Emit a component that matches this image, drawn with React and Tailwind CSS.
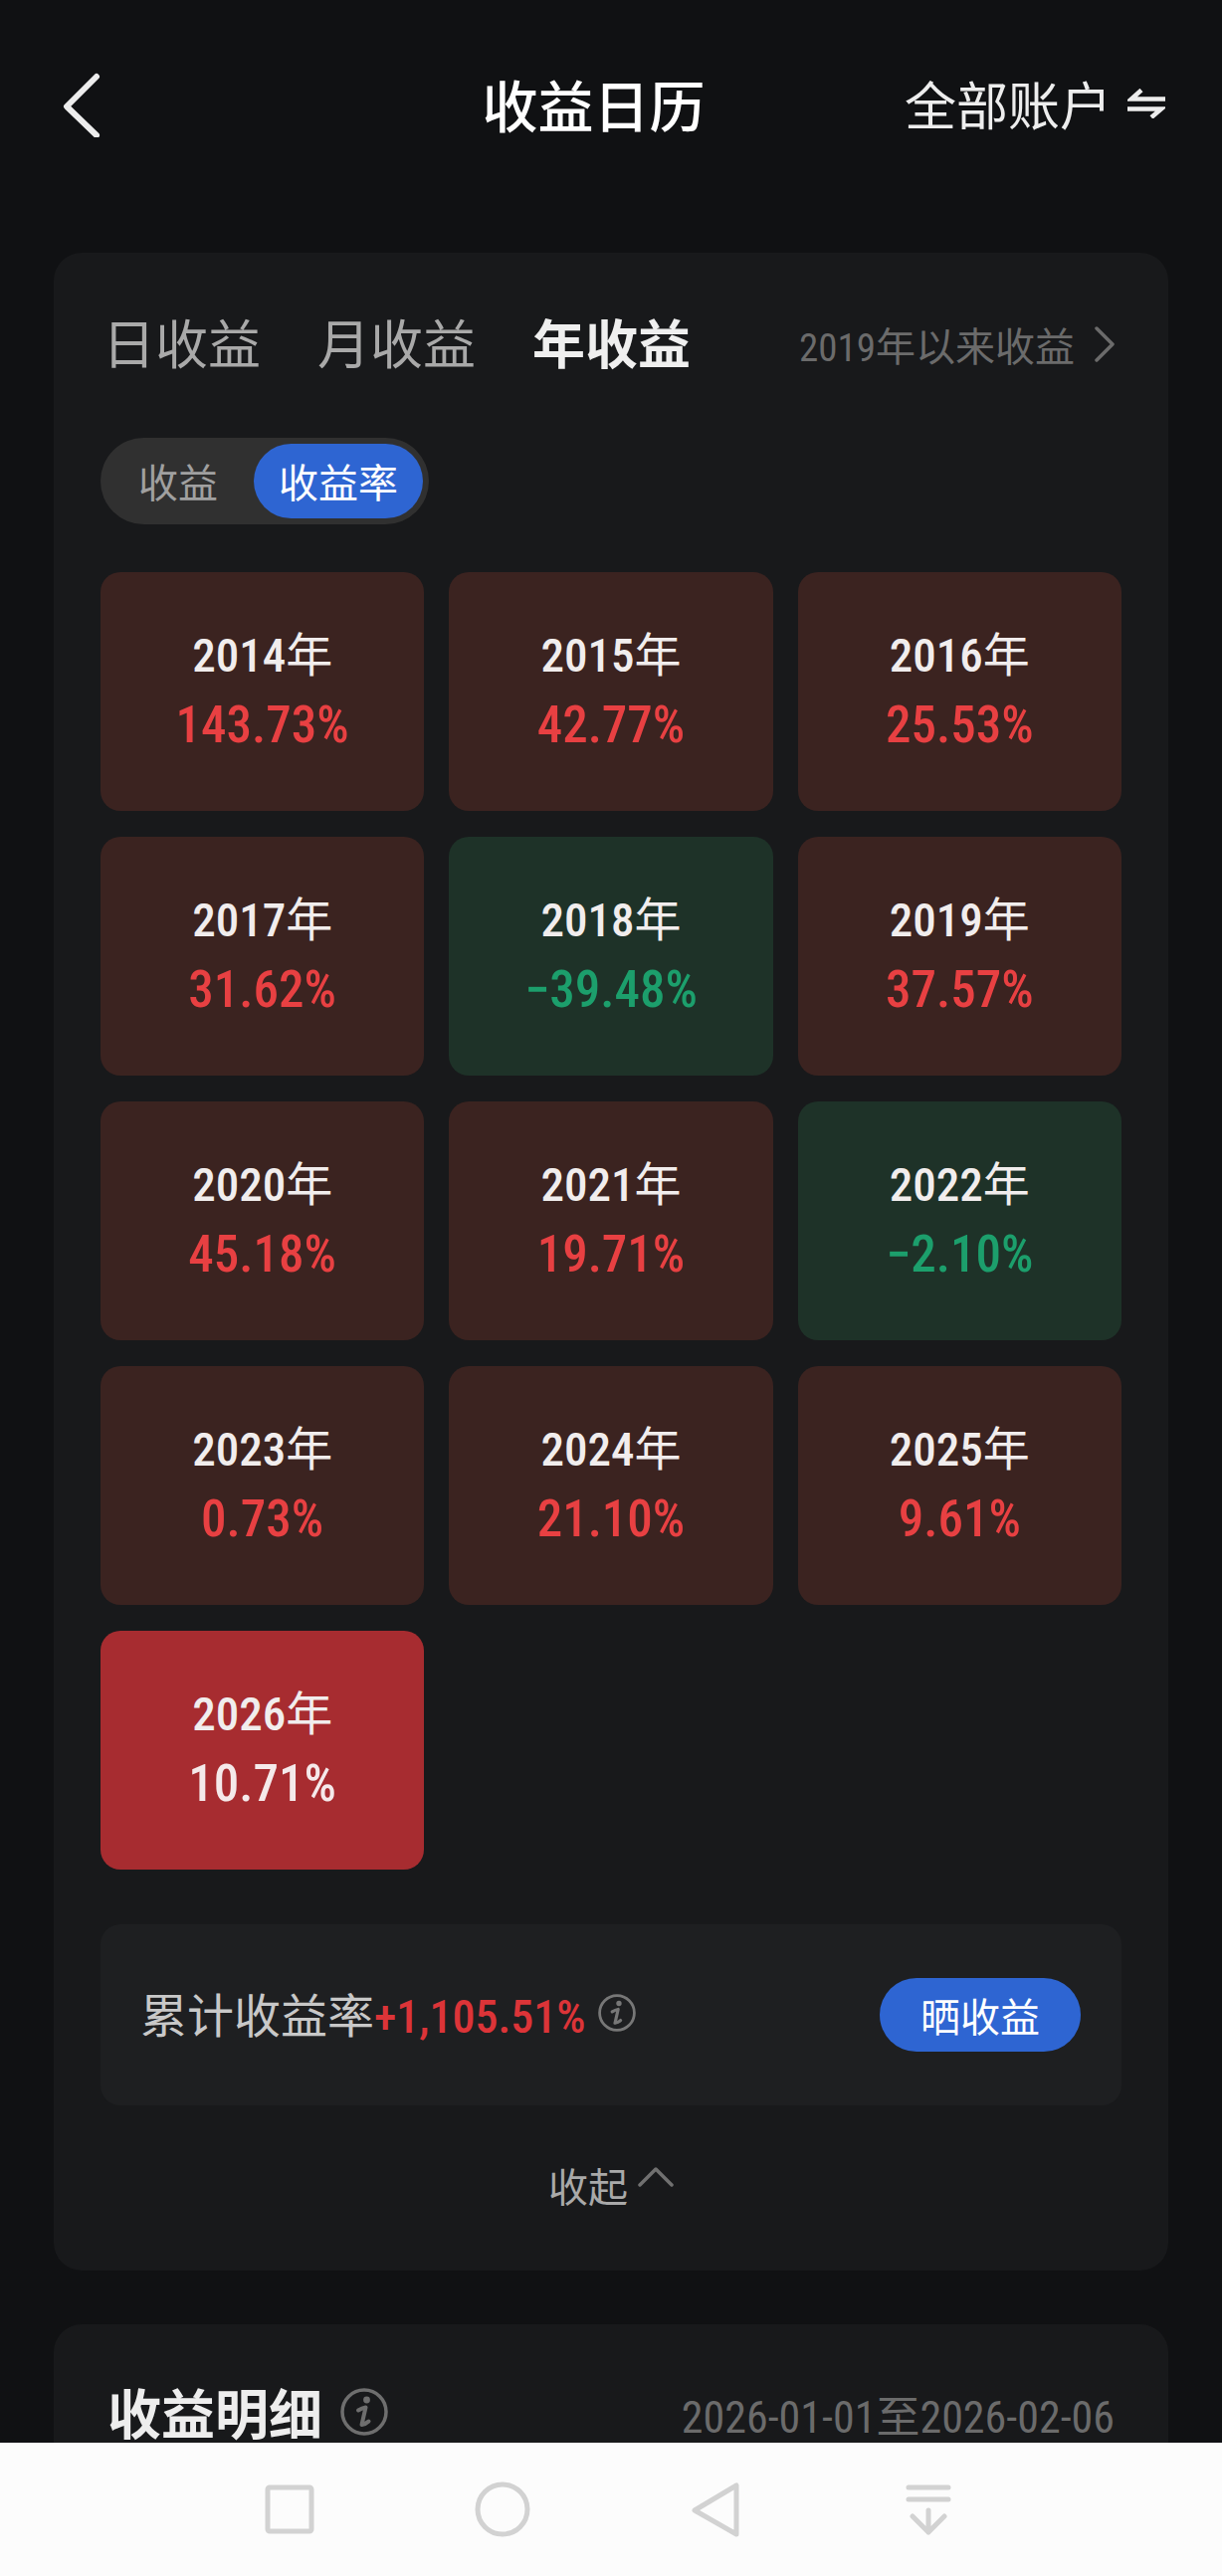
import { useState } from "react";

const tabs = ["日收益", "月收益", "年收益"];
const modes = ["收益", "收益率"];

const years = [
  { year: 2014, rate: "143.73%" },
  { year: 2015, rate: "42.77%" },
  { year: 2016, rate: "25.53%" },
  { year: 2017, rate: "31.62%" },
  { year: 2018, rate: "-39.48%" },
  { year: 2019, rate: "37.57%" },
  { year: 2020, rate: "45.18%" },
  { year: 2021, rate: "19.71%" },
  { year: 2022, rate: "-2.10%" },
  { year: 2023, rate: "0.73%" },
  { year: 2024, rate: "21.10%" },
  { year: 2025, rate: "9.61%" },
  { year: 2026, rate: "10.71%" },
];

function InfoIcon({ className }) {
  return (
    <svg className={className} viewBox="0 0 48 48" fill="none" stroke="currentColor" strokeLinecap="round" strokeLinejoin="round">
      <circle cx="24" cy="24" r="22" strokeWidth="3.5" />
      <circle cx="26.5" cy="12" r="3.4" fill="currentColor" stroke="none" />
      <path d="M18 22.5C20.500 21 23 20 25.500 19.500L21.500 37C24 36.500 26.500 35.500 28.500 33.500" strokeWidth="4" />
    </svg>
  );
}

function YearCard({ item, selected, onSelect }) {
  const down = item.rate.startsWith("-");
  let card = "bg-[#3b2320]";
  let rate = "text-[#e84042]";
  if (selected) {
    card = "bg-[#a72c30]";
    rate = "text-[#f5e9ea]";
  } else if (down) {
    card = "bg-[#1e3228]";
    rate = "text-[#1c9f6c]";
  }

  return (
    <button
      type="button"
      onClick={onSelect}
      className={`flex flex-col items-center gap-2 rounded-[20px] py-[50px] ${card}`}
    >
      <span className="flex items-baseline text-[47px] leading-[60px] text-[#f1eded]">
        <span className="font-['Roboto_Condensed','Roboto',sans-serif] text-[47px] leading-none font-medium">{item.year}</span>年
      </span>
      <span className={`font-['Roboto_Condensed','Roboto',sans-serif] text-[51px] leading-[72px] font-medium ${rate}`}>
        {item.rate.replace("-", "−")}
      </span>
    </button>
  );
}

function App() {
  const [tab, setTab] = useState("年收益");
  const [mode, setMode] = useState("收益率");
  const [selectedYear, setSelectedYear] = useState(2026);

  return (
    <div className="flex h-screen flex-col bg-[#101113] font-['Noto_Sans_CJK_SC',sans-serif] text-[#ededed]">
      <header className="grid shrink-0 grid-cols-[1fr_auto_1fr] items-center pt-[62px] pr-[57px] pb-[108px] pl-[22px]">
        <button type="button" aria-label="返回" className="ml-10 justify-self-start">
          <svg className="h-[68px] w-10" viewBox="0 0 40 68" fill="none" stroke="currentColor" strokeWidth="6" strokeLinecap="round" strokeLinejoin="round">
            <path d="M35 7L5 37L35 66" />
          </svg>
        </button>
        <h1 className="text-[56px] leading-[84px] font-medium text-white">收益日历</h1>
        <button type="button" className="flex items-center gap-4 justify-self-end text-[52px] leading-[80px]">
          全部账户
          <svg className="h-[30px] w-[38px]" viewBox="0 0 38 30" fill="none" stroke="currentColor" strokeWidth="4.500">
            <path d="M38 10.500H4L14 1.500" />
            <path d="M0 20.500H34L24 29" />
          </svg>
        </button>
      </header>

      <main className="flex min-h-0 flex-1 flex-col gap-[54px] overflow-hidden px-[54px]">
        <section className="shrink-0 rounded-[28px] bg-[#18191b] px-[47px] pt-[51px] pb-[56px]">
          <div className="flex items-end justify-between pr-[7px] pl-[2px]">
            <div className="flex gap-[57px]" role="tablist">
              {tabs.map((name) => (
                <button
                  key={name}
                  type="button"
                  role="tab"
                  aria-selected={tab === name}
                  onClick={() => setTab(name)}
                  className={`text-[53px] leading-[76px] ${tab === name ? "font-bold text-[#efefef]" : "text-[#a9a9a9]"}`}
                >
                  {name}
                </button>
              ))}
            </div>
            <a href="#since" className="flex items-center gap-5 text-[40px] leading-[70px] text-[#6b6b6b]">
              <span className="flex items-baseline">
                <span className="font-['Roboto_Condensed','Roboto',sans-serif] text-[39px] leading-none">2019</span>年以来收益
              </span>
              <svg className="h-9 w-5" viewBox="0 0 20 36" fill="none" stroke="currentColor" strokeWidth="3.500" strokeLinecap="round" strokeLinejoin="round">
                <path d="M2 2L18 18L2 34" />
              </svg>
            </a>
          </div>

          <div className="mt-[59px] flex w-fit rounded-full bg-[#303030] p-[6px]">
            {modes.map((name) => (
              <button
                key={name}
                type="button"
                aria-pressed={mode === name}
                onClick={() => setMode(name)}
                className={`rounded-full text-[40px] leading-[75px] ${
                  mode === name ? "bg-[#2e65d2] px-[25px] text-white" : "pr-9 pl-8 text-[#a0a0a0]"
                }`}
              >
                {name}
              </button>
            ))}
          </div>

          <div className="mt-[48px] grid grid-cols-3 gap-x-[25px] gap-y-[26px]">
            {years.map((item) => (
              <YearCard
                key={item.year}
                item={item}
                selected={item.year === selectedYear}
                onSelect={() => setSelectedYear(item.year)}
              />
            ))}
          </div>

          <div className="mt-[55px] flex items-center justify-between rounded-[20px] bg-[#1e1f21] py-[54px] pr-[41px] pl-10">
            <div className="flex items-center pb-1 text-[#c8c8c8]">
              <span className="flex items-baseline text-[47px] leading-[70px]">
                累计收益率
                <span className="font-['Roboto_Condensed','Roboto',sans-serif] text-[46px] leading-none font-medium text-[#dc3438]">+1,105.51%</span>
              </span>
              <button type="button" aria-label="收益率说明" className="ml-3 text-[#777]">
                <InfoIcon className="size-[38px]" />
              </button>
            </div>
            <button type="button" className="rounded-full bg-[#2e65d2] px-[41px] text-[40px] leading-[74px] text-white">
              晒收益
            </button>
          </div>

          <button type="button" className="mx-auto mt-[50px] flex items-center gap-[10px] text-[40px] leading-[60px] text-[#a9a9a9]">
            收起
            <svg className="mb-4 h-5 w-9 text-[#707070]" viewBox="0 0 36 20" fill="none" stroke="currentColor" strokeWidth="3.500" strokeLinecap="round" strokeLinejoin="round">
              <path d="M2 18L18 2L34 18" />
            </svg>
          </button>
        </section>

        <section className="shrink-0 rounded-t-[28px] bg-[#18191b] px-[54px] pt-12">
          <div className="flex items-end justify-between">
            <div className="flex items-center gap-[18px]">
              <h2 className="text-[54px] leading-[80px] font-bold">收益明细</h2>
              <button type="button" aria-label="明细说明" className="text-[#6e6e6e]">
                <InfoIcon className="size-12" />
              </button>
            </div>
            <span className="font-['Roboto_Condensed','Roboto','Noto_Sans_CJK_SC',sans-serif] text-[44px] leading-[68px] text-[#6b6b6b]">
              2026-01-01至2026-02-06
            </span>
          </div>
        </section>
      </main>

      <nav className="flex shrink-0 items-center justify-center gap-[158px] bg-[#fcfcfc] py-[39px] pr-1 text-[#d2d2d2]">
        <button type="button" aria-label="最近任务">
          <svg className="size-14" viewBox="0 0 56 56" fill="none" stroke="currentColor" strokeWidth="5">
            <rect x="6" y="6" width="44" height="44" rx="2" />
          </svg>
        </button>
        <button type="button" aria-label="主屏幕">
          <svg className="size-14" viewBox="0 0 56 56" fill="none" stroke="currentColor" strokeWidth="5">
            <circle cx="28" cy="28" r="25" />
          </svg>
        </button>
        <button type="button" aria-label="返回上一页">
          <svg className="size-14" viewBox="0 0 56 56" fill="none" stroke="currentColor" strokeWidth="5" strokeLinejoin="round">
            <path d="M49 4V53L7 29Z" />
          </svg>
        </button>
        <button type="button" aria-label="收起导航栏">
          <svg className="size-14" viewBox="0 0 56 56" fill="none" stroke="currentColor" strokeWidth="5" strokeLinecap="round" strokeLinejoin="round">
            <path d="M8 6H48M8 18H48M28 29V51M12 35L28 51L44 35" />
          </svg>
        </button>
      </nav>
    </div>
  );
}

export default App;
